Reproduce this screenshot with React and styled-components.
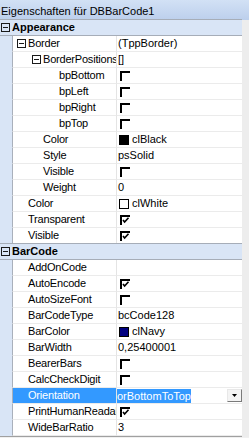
import React from 'react'
import styled, { createGlobalStyle } from 'styled-components'

const GlobalStyle = createGlobalStyle`
  html, body {
    margin: 0;
    padding: 0;
    background: #f0f0f0;
  }
  body {
    font-family: 'Liberation Sans', Arial, sans-serif;
    font-size: 11px;
    color: #000;
  }
`

// property list, top to bottom
const rows = [
  { kind: 'category', name: 'Appearance' },
  { name: 'Border', level: 0, expand: true, value: '(TppBorder)' },
  { name: 'BorderPositions', level: 1, expand: true, value: '[]' },
  { name: 'bpBottom', level: 2, check: false },
  { name: 'bpLeft', level: 2, check: false },
  { name: 'bpRight', level: 2, check: false },
  { name: 'bpTop', level: 2, check: false },
  { name: 'Color', level: 1, swatch: '#000', value: 'clBlack' },
  { name: 'Style', level: 1, value: 'psSolid' },
  { name: 'Visible', level: 1, check: false },
  { name: 'Weight', level: 1, value: '0' },
  { name: 'Color', level: 0, swatch: '#fff', value: 'clWhite' },
  { name: 'Transparent', level: 0, check: true },
  { name: 'Visible', level: 0, check: true },
  { kind: 'category', name: 'BarCode' },
  { name: 'AddOnCode', level: 0, value: '' },
  { name: 'AutoEncode', level: 0, check: true },
  { name: 'AutoSizeFont', level: 0, check: false },
  { name: 'BarCodeType', level: 0, value: 'bcCode128' },
  { name: 'BarColor', level: 0, swatch: '#000080', value: 'clNavy' },
  { name: 'BarWidth', level: 0, value: '0,25400001' },
  { name: 'BearerBars', level: 0, check: false },
  { name: 'CalcCheckDigit', level: 0, check: false },
  { name: 'Orientation', level: 0, value: 'orBottomToTop', selected: true },
  { name: 'PrintHumanReadable', level: 0, check: true },
  { name: 'WideBarRatio', level: 0, value: '3' }
]

const indent = [15, 30, 46]

function ExpandBox() {
  return (
    <Box>
      <svg width="9" height="9" viewBox="0 0 9 9">
        <rect x="0.5" y="0.5" width="8" height="8" fill="none" stroke="#1a1a1a" />
        <path d="M2 4.5h5" stroke="#1a1a1a" />
      </svg>
    </Box>
  )
}

function CheckBox({ checked }) {
  return (
    <Check>
      <svg width="10" height="10" viewBox="0 0 10 10">
        <path d="M1 10V1h9" fill="none" stroke="#000" strokeWidth="2" />
        {checked && (
          <path d="M3 5l1.6 2L8.5 2.8" fill="none" stroke="#000" strokeWidth="1.6" />
        )}
      </svg>
    </Check>
  )
}

function Value({ row }) {
  if (row.check !== undefined) return <CheckBox checked={row.check} />
  if (row.selected) {
    return (
      <>
        <Selection>{row.value}</Selection>
        <DropButton>
          <svg width="5" height="3" viewBox="0 0 5 3">
            <path d="M0 0h5L2.5 3z" fill="#000" />
          </svg>
        </DropButton>
      </>
    )
  }
  return (
    <>
      {row.swatch && <Swatch $color={row.swatch} />}
      <ValueText>{row.value}</ValueText>
    </>
  )
}

function PropertyRow({ row }) {
  if (row.kind === 'category') {
    return (
      <CategoryRow>
        <Gutter>
          <ExpandBox />
        </Gutter>
        <CategoryName>{row.name}</CategoryName>
      </CategoryRow>
    )
  }
  return (
    <Row>
      <Gutter />
      <NameCell $selected={row.selected} $indent={indent[row.level]} $expand={row.expand}>
        {row.expand && <ExpandBox />}
        <NameText>{row.name}</NameText>
      </NameCell>
      <ValueCell>
        <Value row={row} />
      </ValueCell>
    </Row>
  )
}

export default function App() {
  return (
    <>
      <GlobalStyle />
      <Panel>
        <TitleBar>Eigenschaften für DBBarCode1</TitleBar>
        <Body>
          <Grid>
            {rows.map((row, i) => (
              <PropertyRow key={i} row={row} />
            ))}
          </Grid>
          <Strip />
        </Body>
      </Panel>
    </>
  )
}

const Panel = styled.div`
  width: 249px;
  height: 438px;
  overflow: hidden;
  display: flex;
  flex-direction: column;
  background: #f0f0f0;
`

const TitleBar = styled.div`
  height: 20px;
  box-sizing: border-box;
  padding: 4px 0 0 1px;
  line-height: 14px;
  white-space: nowrap;
  background: linear-gradient(to bottom, #d2e1f5, #bccfec);
`

const Body = styled.div`
  display: flex;
`

const Grid = styled.div`
  width: 242px;
  display: flex;
  flex-direction: column;
  background: #fff;
  border-bottom: 1px solid #a0a0a0;
`

const Strip = styled.div`
  flex: 1;
  background: #ededed;
`

const Row = styled.div`
  display: flex;
  height: 16px;
`

const CategoryRow = styled.div`
  display: flex;
  height: 16px;
  box-sizing: border-box;
  background: #d9e5f6;
  border-bottom: 1px solid #a6adb8;
  box-shadow: 0 -1px 0 #a6adb8;
`

const Gutter = styled.div`
  width: 12px;
  flex: none;
  display: flex;
  align-items: center;
  justify-content: flex-start;
  padding-left: 1px;
  box-sizing: border-box;
  background: #d9e5f6;
`

const Box = styled.span`
  display: inline-flex;
  width: 9px;
  height: 9px;
  flex: none;
  margin-right: 2px;
`

const CategoryName = styled.div`
  font-weight: bold;
  line-height: 15px;
  white-space: nowrap;
`

const NameCell = styled.div`
  width: 105px;
  flex: none;
  box-sizing: border-box;
  display: flex;
  align-items: center;
  overflow: hidden;
  white-space: nowrap;
  letter-spacing: -0.2px;
  padding-left: ${p => (p.$expand ? p.$indent - 11 : p.$indent)}px;
  border-left: 1px solid #a9b0bb;
  border-right: 1px solid #e4e4e4;
  border-bottom: 1px solid #ebebeb;
  background: ${p => (p.$selected ? '#3399ff' : '#fff')};
  color: ${p => (p.$selected ? '#fff' : '#000')};
`

const NameText = styled.span`
  line-height: 15px;
`

const ValueCell = styled.div`
  width: 125px;
  flex: none;
  box-sizing: border-box;
  display: flex;
  align-items: center;
  overflow: hidden;
  white-space: nowrap;
  border-bottom: 1px solid #ebebeb;
`

const ValueText = styled.span`
  padding-left: 1px;
  line-height: 15px;
`

const Check = styled.span`
  display: inline-flex;
  margin-left: 3px;
`

const Swatch = styled.span`
  width: 10px;
  height: 10px;
  box-sizing: border-box;
  margin: 0 2px 0 2px;
  flex: none;
  background: ${p => p.$color};
  border: 1px solid #000;
`

const Selection = styled.span`
  background: #3399ff;
  color: #fff;
  line-height: 14px;
`

const DropButton = styled.span`
  margin-left: auto;
  width: 15px;
  height: 13px;
  box-sizing: border-box;
  display: flex;
  align-items: center;
  justify-content: center;
  background: #f4f4f4;
  border: 1px solid;
  border-color: #e8e8e8 #7a7a7a #7a7a7a #e8e8e8;
`
